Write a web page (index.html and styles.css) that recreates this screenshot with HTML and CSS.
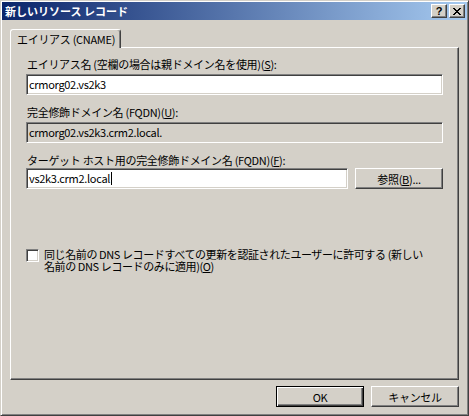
FILE: index.html
```html
<!DOCTYPE html>
<html lang="ja">
<head>
    <meta charset="UTF-8">
    <title>新しいリソース レコード</title>
    <link rel="stylesheet" href="styles.css">
</head>
<body>
    <div class="window">
        <div class="titlebar">
            <span class="title">新しいリソース レコード</span>
            <div class="caption-buttons">
                <div class="cap-btn help">?</div>
                <div class="cap-btn close">
                    <svg width="8" height="7" viewBox="0 0 8 7">
                        <path d="M0 0h2v1h1v1h2v-1h1v-1h2v1h-1v1h-1v1h-1v1h1v1h1v1h1v1h-2v-1h-1v-1h-2v1h-1v1h-2v-1h1v-1h1v-1h1v-1h-1v-1h-1v-1h-1z" fill="#000"/>
                    </svg>
                </div>
            </div>
        </div>

        <div class="client">
            <div class="tabs">
                <div class="tab active">エイリアス (CNAME)</div>
            </div>

            <div class="panel">
                <label class="label first">エイリアス名 (空欄の場合は親ドメイン名を使用)(<u>S</u>):</label>
                <div class="textbox">crmorg02.vs2k3</div>

                <label class="label">完全修飾ドメイン名 (FQDN)(<u>U</u>):</label>
                <div class="textbox disabled">crmorg02.vs2k3.crm2.local.</div>

                <label class="label third">ターゲット ホスト用の完全修飾ドメイン名 (FQDN)(<u>F</u>):</label>
                <div class="row">
                    <div class="textbox short">vs2k3.crm2.local<span class="caret"></span></div>
                    <div class="btn">参照(<u>B</u>)...</div>
                </div>

                <div class="check-row">
                    <div class="checkbox"></div>
                    <div class="check-label">同じ名前の DNS レコードすべての更新を認証されたユーザーに許可する (新しい<br>名前の DNS レコードのみに適用)(<u>O</u>)</div>
                </div>
            </div>

            <div class="footer">
                <div class="btn default">OK</div>
                <div class="btn">キャンセル</div>
            </div>
        </div>
    </div>
</body>
</html>
```

FILE: styles.css
```css
* {
    box-sizing: border-box;
}
body {
    margin: 0;
    width: 469px;
    height: 416px;
    overflow: hidden;
    background: #d4d0c8;
    font-family: "Noto Sans CJK JP", "Liberation Sans", sans-serif;
    font-size: 11px;
    letter-spacing: -0.3px;
    color: #000;
}
u {
    text-decoration: underline;
    text-underline-offset: 1px;
}

/* window frame */
.window {
    width: 469px;
    height: 416px;
    display: flex;
    flex-direction: column;
    padding: 1px;
    background: #d4d0c8;
    border: 1px solid;
    border-color: #d4d0c8 #404040 #404040 #d4d0c8;
    box-shadow: inset 1px 1px #fff, inset -1px -1px #808080;
}
.titlebar {
    height: 18px;
    display: flex;
    align-items: center;
    justify-content: space-between;
    padding: 0 2px 0 3px;
    background: linear-gradient(to right, #0a246a, #a6caf0);
}
.title {
    color: #fff;
    font-weight: bold;
    font-size: 11px;
    line-height: 18px;
    letter-spacing: 0;
}
.caption-buttons {
    display: flex;
    gap: 2px;
}
.cap-btn {
    width: 16px;
    height: 14px;
    display: flex;
    align-items: center;
    justify-content: center;
    background: #d4d0c8;
    border: 1px solid;
    border-color: #fff #404040 #404040 #fff;
    box-shadow: inset -1px -1px #808080;
}
.cap-btn.help {
    font-family: "Liberation Sans", sans-serif;
    font-weight: bold;
    font-size: 11px;
    line-height: 12px;
    letter-spacing: 0;
}

/* client area */
.client {
    flex: 1;
    padding: 9px 8px 0 8px;
}
.tabs {
    display: flex;
}
.tab {
    position: relative;
    z-index: 1;
    height: 19px;
    width: 111px;
    margin-bottom: -1px;
    padding: 0 0 0 6px;
    line-height: 18px;
    white-space: nowrap;
    background: #d4d0c8;
    border: 1px solid;
    border-bottom: none;
    border-color: #fff #404040 #fff #fff;
    border-radius: 3px 3px 0 0;
    box-shadow: inset -1px 0 #808080;
}
.panel {
    height: 333px;
    width: 449px;
    padding: 9px 0 0 15px;
    border: 1px solid;
    border-color: #fff #404040 #404040 #fff;
    box-shadow: inset -1px -1px #808080;
}
.label {
    display: block;
    height: 14px;
    line-height: 14px;
    margin: 10px 0 3px 1px;
    white-space: nowrap;
}
.label.first {
    margin-top: 0;
}
.label.third {
    margin-bottom: 1px;
}
.textbox {
    width: 417px;
    height: 21px;
    padding: 0 2px;
    line-height: 19px;
    white-space: nowrap;
    background: #fff;
    border: 1px solid;
    border-color: #808080 #fff #fff #808080;
    box-shadow: inset 1px 1px #404040, inset -1px -1px #d4d0c8;
}
.textbox.disabled {
    background: #d4d0c8;
}
.textbox.short {
    width: 322px;
}
.caret {
    display: inline-block;
    width: 1px;
    height: 13px;
    margin-left: 1px;
    background: #000;
    vertical-align: -2px;
}
.row {
    display: flex;
    gap: 7px;
}

.btn {
    width: 88px;
    height: 21px;
    display: flex;
    align-items: center;
    justify-content: center;
    background: #d4d0c8;
    border: 1px solid;
    border-color: #fff #404040 #404040 #fff;
    box-shadow: inset -1px -1px #808080;
}
.btn.default {
    border-color: #000;
    box-shadow: inset 1px 1px #fff, inset -1px -1px #404040, inset -2px -2px #808080;
}

.check-row {
    display: flex;
    gap: 5px;
    margin-top: 59px;
}
.checkbox {
    flex: none;
    width: 13px;
    height: 13px;
    margin-top: 1px;
    background: #fff;
    border: 1px solid;
    border-color: #808080 #fff #fff #808080;
    box-shadow: inset 1px 1px #404040, inset -1px -1px #d4d0c8;
}
.check-label {
    line-height: 12px;
    letter-spacing: -0.4px;
    white-space: nowrap;
}

.footer {
    display: flex;
    justify-content: flex-end;
    gap: 7px;
    margin-top: 6px;
}
```
